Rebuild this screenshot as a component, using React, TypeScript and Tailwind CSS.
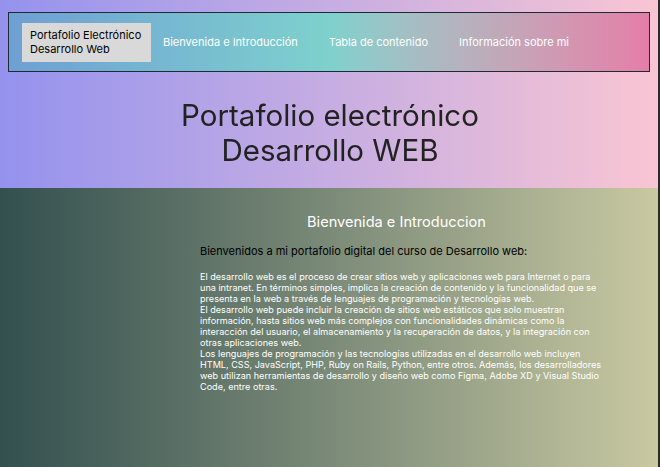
const navItems = ["Bienvenida e Introducción", "Tabla de contenido", "Información sobre mi"];

const App: React.FC = () => {
  return (
    <div className="w-[660px] h-[467px] overflow-hidden flex flex-col font-['Inter',sans-serif] border-r-2 border-[#2a2a2a]">
      {/* Header */}
      <header className="h-[188px] bg-gradient-to-r from-[#9592ee] to-[#f9c5d2] pt-[12px] px-[8px] flex flex-col">
        <nav className="h-[60px] border border-[#1e2a38] bg-gradient-to-r from-[#6f9fd3] via-[#7ed1cd] to-[#e47ea8] flex items-center pl-[13px]">
          <div className="w-[129px] h-[39px] bg-[#d9d9d9] text-black text-[11px] leading-[14px] pl-[8px] pt-[5px]">
            Portafolio Electrónico
            <br />
            Desarrollo Web
          </div>
          <ul className="flex items-center text-white text-[11px] ml-[12px] gap-[31px]">
            {navItems.map((item) => (
              <li key={item}>{item}</li>
            ))}
          </ul>
        </nav>
        <h1 className="text-center text-[#222] text-[29.5px] leading-[35px] mt-[26px] pl-[2px] blur-[0.4px]">
          Portafolio electrónico
          <br />
          Desarrollo WEB
        </h1>
      </header>

      {/* Main */}
      <main className="flex-1 bg-gradient-to-r from-[#33504f] to-[#c9c9a2] pl-[200px] pt-[24px]">
        <div className="w-[405px]">
          <h2 className="text-center text-white text-[14.6px] leading-[20px] pr-[12px]">Bienvenida e Introduccion</h2>
          <p className="text-black text-[11px] leading-[14px] mt-[12px]">
            Bienvenidos a mi portafolio digital del curso de Desarrollo web:
          </p>
          <p className="text-white text-[9.1px] leading-[11px] mt-[13px]">
            El desarrollo web es el proceso de crear sitios web y aplicaciones web para Internet o para una intranet. En términos simples, implica la creación de contenido y la funcionalidad que se presenta en la web a través de lenguajes de programación y tecnologías web.
            <br />
            El desarrollo web puede incluir la creación de sitios web estáticos que solo muestran información, hasta sitios web más complejos con funcionalidades dinámicas como la interacción del usuario, el almacenamiento y la recuperación de datos, y la integración con otras aplicaciones web.
            <br />
            Los lenguajes de programación y las tecnologías utilizadas en el desarrollo web incluyen HTML, CSS, JavaScript, PHP, Ruby on Rails, Python, entre otros. Además, los desarrolladores web utilizan herramientas de desarrollo y diseño web como Figma, Adobe XD y Visual Studio Code, entre otras.
          </p>
        </div>
      </main>
    </div>
  );
};

export default App;
